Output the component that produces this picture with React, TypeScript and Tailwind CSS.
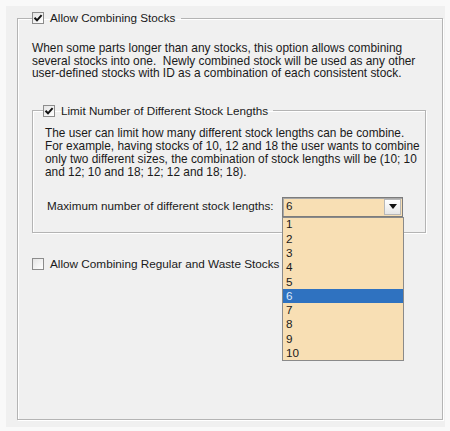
import { useState } from 'react';

const etched = 'border border-[#b4b4b4] shadow-[1px_1px_0_#ffffff,inset_1px_1px_0_#ffffff]';

function CheckBox({ checked }: { checked: boolean }) {
  return (
    <span className="flex h-[12px] w-[12px] shrink-0 items-center justify-center border border-[#8c8c8c] bg-gradient-to-br from-[#e4e4e4] to-white">
      {checked && (
        <svg width="10" height="10" viewBox="0 0 10 10">
          <path d="M1.5 4.8 L4 7.3 L8.6 2.2" fill="none" stroke="#111" strokeWidth="2" />
        </svg>
      )}
    </span>
  );
}

const sizes = ['1', '2', '3', '4', '5', '6', '7', '8', '9', '10'];

export default function App() {
  const [selected] = useState('6');

  return (
    <div className="h-[431px] w-[450px] whitespace-nowrap bg-[#f9f9f9] p-[6px] text-[11.7px] leading-[12.5px] text-[#1a1a1a] [font-family:'Liberation_Sans',Arial,sans-serif]">
      <div className="h-[421px] w-[439px] bg-[#f0f0f0] pl-[11px] pt-[5px]">
        <fieldset className={`h-[409px] w-[426px] min-w-0 px-[14px] ${etched}`}>
          <legend className="flex items-center gap-[6px] pr-[6px] leading-[14px]">
            <CheckBox checked />
            <span>Allow Combining Stocks</span>
          </legend>

          <p className="mt-[17px] text-[11.9px]">
            When some parts longer than any stocks, this option allows combining
            <br />
            several stocks into one.&nbsp; Newly combined stock will be used as any other
            <br />
            user-defined stocks with ID as a combination of each consistent stock.
          </p>

          <fieldset className={`mt-[24px] h-[129px] w-[394px] min-w-0 px-[12px] ${etched}`}>
            <legend className="-ml-[2px] flex items-center gap-[6px] pr-[5px] leading-[14px]">
              <CheckBox checked />
              <span>Limit Number of Different Stock Lengths</span>
            </legend>

            <p className="mt-[9.5px] text-[11.85px] leading-[13px]">
              The user can limit how many different stock lengths can be combine.
              <br />
              For example, having stocks of 10, 12 and 18 the user wants to combine
              <br />
              only two different sizes, the combination of stock lengths will be (10; 10
              <br />
              and 12; 10 and 18; 12; 12 and 18; 18).
            </p>

            <div className="mt-[17.5px] flex items-center">
              <span className="ml-[2px] w-[235px]">Maximum number of different stock lengths:</span>
              <div className="relative">
                <div className="flex h-[20px] w-[121px] items-center border border-[#7c7c7c] bg-[#f8dfb4] shadow-[inset_1px_1px_0_#a8a8a8]">
                  <span className="flex-1 pl-[3px]">{selected}</span>
                  <span className="mr-[1px] flex h-[16px] w-[17px] items-center justify-center border border-[#b8b8b8] bg-gradient-to-b from-white to-[#e6e6e6]">
                    <svg width="8" height="5" viewBox="0 0 8 5">
                      <path d="M0 0 H8 L4 5 Z" fill="#111" />
                    </svg>
                  </span>
                </div>
                <ul className="absolute left-0 top-[20px] z-10 w-[122px] border border-[#8a8a8a] bg-[#f8dfb4]">
                  {sizes.map((s) => (
                    <li
                      key={s}
                      className={`flex h-[14.3px] items-center pl-[3px] ${
                        s === selected ? 'bg-[#2f72c0] text-[#dce9fa]' : ''
                      }`}
                    >
                      {s}
                    </li>
                  ))}
                </ul>
              </div>
            </div>
          </fieldset>

          <label className="mt-[24px] flex items-center gap-[6px] leading-[14px]">
            <CheckBox checked={false} />
            <span className="text-[11.75px]">Allow Combining Regular and Waste Stocks</span>
          </label>
        </fieldset>
      </div>
    </div>
  );
}
